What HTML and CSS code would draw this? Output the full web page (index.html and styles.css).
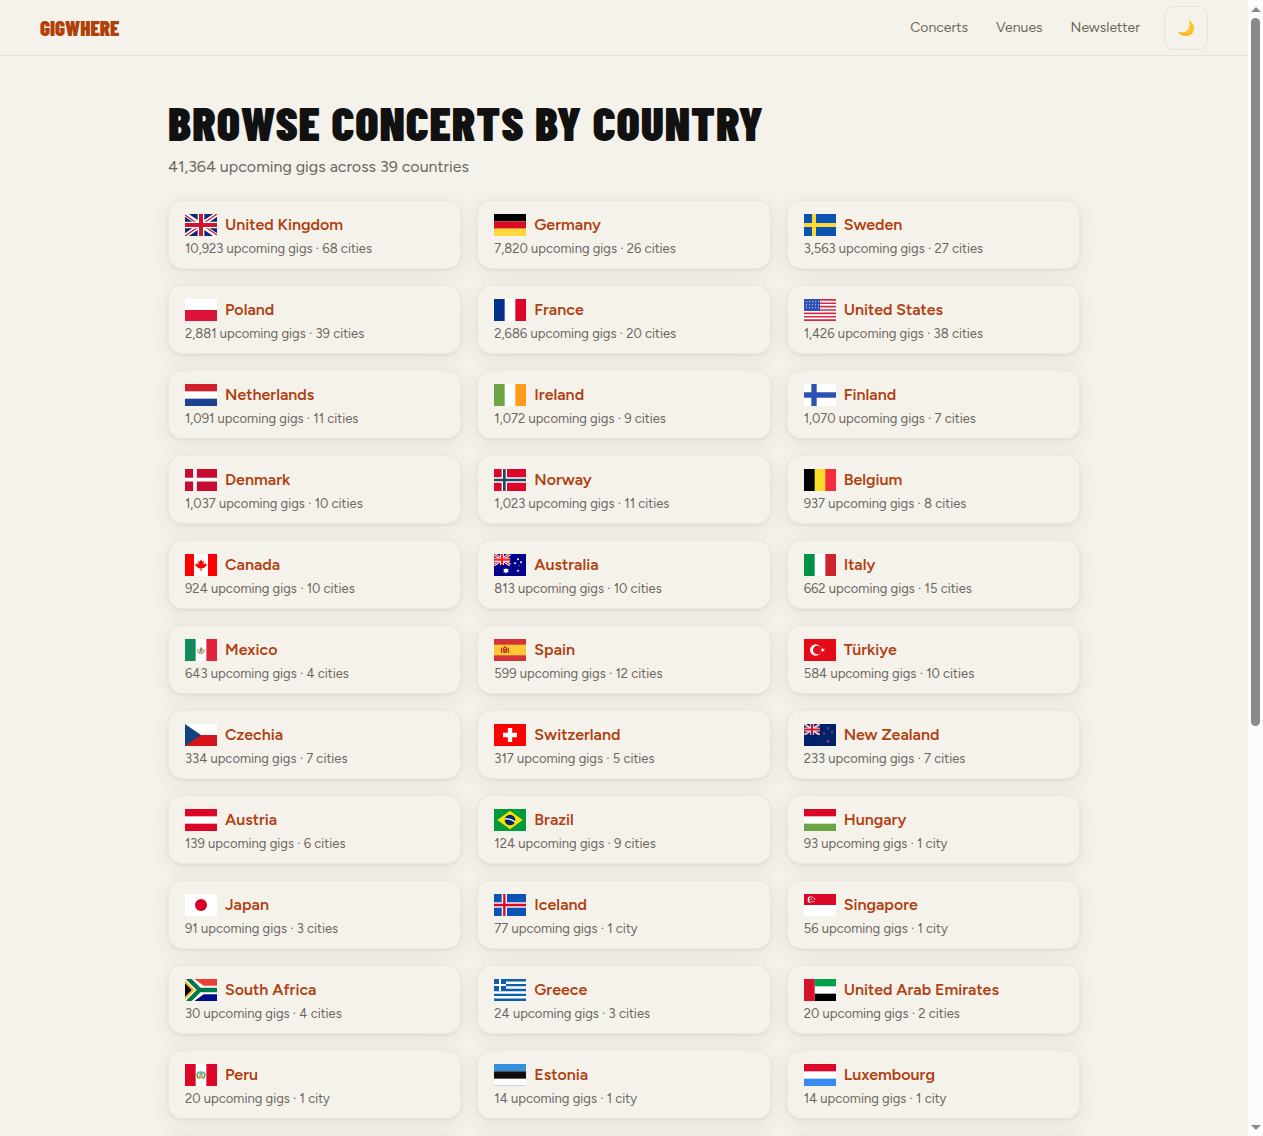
FILE: index.html
```html
<!DOCTYPE html>
<html lang="en">
<head>
<meta charset="utf-8">
<meta name="viewport" content="width=device-width, initial-scale=1">
<title>Gigwhere</title>
<link rel="stylesheet" href="styles.css">
</head>
<body>
<svg class="defs" aria-hidden="true">
  <symbol id="union" viewBox="0 0 96 66" preserveAspectRatio="none">
    <rect width="96" height="66" fill="#0b2a73"/>
    <path d="M0 0L96 66M96 0L0 66" stroke="#fff" stroke-width="13"/>
    <path d="M0 3L48 36M96 63L48 30M96 0L48 33M0 66L48 33" stroke="#d0142c" stroke-width="4"/>
    <path d="M48 0V66M0 33H96" stroke="#fff" stroke-width="20"/>
    <path d="M48 0V66M0 33H96" stroke="#d0142c" stroke-width="12"/>
  </symbol>
</svg>
<div class="screen">
<div class="pane">
  <header class="topbar">
    <a class="logo" href="#">GIGWHERE</a>
    <nav class="nav">
      <a href="#">Concerts</a>
      <a href="#">Venues</a>
      <a href="#">Newsletter</a>
    </nav>
    <button class="theme" type="button" aria-label="Dark mode">
      <svg viewBox="0 0 18 18" aria-hidden="true"><path d="M11.500 1C16 3.500 18.500 8 16.300 12.500C13.500 18 5 18.600 1 12.600C6 14.500 10.500 12.500 11.900 9C13 6 12.600 3.500 11.500 1Z" fill="#ffc62b"/><path d="M16.300 12.500C13.500 18 5 18.600 1 12.600C6 16 13 15.500 16.300 12.500Z" fill="#f5b31d"/></svg>
    </button>
  </header>
  <main class="content">
    <h1>BROWSE CONCERTS BY COUNTRY</h1>
    <p class="summary">41,364 upcoming gigs across 39 countries</p>
    <ul class="grid">
      <li class="card"><a class="name" href="#"><svg class="flag" viewBox="0 0 96 66" preserveAspectRatio="none"><use href="#union" width="96" height="66"/></svg>United Kingdom</a><p>10,923 upcoming gigs · 68 cities</p></li>
      <li class="card"><a class="name" href="#"><svg class="flag" viewBox="0 0 96 66" preserveAspectRatio="none"><path fill="#000" d="M0 0H96V22H0Z"/><path fill="#dc0a1e" d="M0 22H96V44H0Z"/><path fill="#ffd93b" d="M0 44H96V66H0Z"/></svg>Germany</a><p>7,820 upcoming gigs · 26 cities</p></li>
      <li class="card"><a class="name" href="#"><svg class="flag" viewBox="0 0 96 66" preserveAspectRatio="none"><path fill="#0a52b4" d="M0 0H96V66H0Z"/><path stroke="#ffd733" stroke-width="12" d="M30 0V66M0 33H96"/></svg>Sweden</a><p>3,563 upcoming gigs · 27 cities</p></li>

      <li class="card"><a class="name" href="#"><svg class="flag" viewBox="0 0 96 66" preserveAspectRatio="none"><path fill="#fff" d="M0 0H96V33H0Z"/><path fill="#dc143c" d="M0 33H96V66H0Z"/></svg>Poland</a><p>2,881 upcoming gigs · 39 cities</p></li>
      <li class="card"><a class="name" href="#"><svg class="flag" viewBox="0 0 96 66" preserveAspectRatio="none"><path fill="#fff" d="M0 0H96V66H0Z"/><path fill="#04308c" d="M0 0H32V66H0Z"/><path fill="#dc0628" d="M64 0H96V66H64Z"/></svg>France</a><p>2,686 upcoming gigs · 20 cities</p></li>
      <li class="card"><a class="name" href="#"><svg class="flag" viewBox="0 0 96 66" preserveAspectRatio="none"><path fill="#fff" d="M0 0H96V66H0Z"/><path stroke="#d02c46" stroke-width="5" d="M0 2.500H96M0 12.700H96M0 22.900H96M0 33H96M0 43.200H96M0 53.300H96M0 63.500H96"/><path fill="#3052b4" d="M0 0H48V36H0Z"/><path stroke="#c8d2f0" stroke-width="3" stroke-dasharray="3 6" d="M6 8H45M6 17H45M6 26H45"/></svg>United States</a><p>1,426 upcoming gigs · 38 cities</p></li>

      <li class="card"><a class="name" href="#"><svg class="flag" viewBox="0 0 96 66" preserveAspectRatio="none"><path fill="#fff" d="M0 0H96V66H0Z"/><path fill="#cf202b" d="M0 0H96V22H0Z"/><path fill="#1f4290" d="M0 44H96V66H0Z"/></svg>Netherlands</a><p>1,091 upcoming gigs · 11 cities</p></li>
      <li class="card"><a class="name" href="#"><svg class="flag" viewBox="0 0 96 66" preserveAspectRatio="none"><path fill="#fff" d="M0 0H96V66H0Z"/><path fill="#6da544" d="M0 0H32V66H0Z"/><path fill="#ff9a1a" d="M64 0H96V66H64Z"/></svg>Ireland</a><p>1,072 upcoming gigs · 9 cities</p></li>
      <li class="card"><a class="name" href="#"><svg class="flag" viewBox="0 0 96 66" preserveAspectRatio="none"><path fill="#fff" d="M0 0H96V66H0Z"/><path stroke="#2e52b2" stroke-width="16" d="M30 0V66M0 33H96"/></svg>Finland</a><p>1,070 upcoming gigs · 7 cities</p></li>

      <li class="card"><a class="name" href="#"><svg class="flag" viewBox="0 0 96 66" preserveAspectRatio="none"><path fill="#c60c30" d="M0 0H96V66H0Z"/><path stroke="#fff" stroke-width="11" d="M30 0V66M0 32H96"/></svg>Denmark</a><p>1,037 upcoming gigs · 10 cities</p></li>
      <li class="card"><a class="name" href="#"><svg class="flag" viewBox="0 0 96 66" preserveAspectRatio="none"><path fill="#dc0628" d="M0 0H96V66H0Z"/><path stroke="#fff" stroke-width="16" d="M31 0V66M0 33H96"/><path stroke="#1b4470" stroke-width="8" d="M31 0V66M0 33H96"/></svg>Norway</a><p>1,023 upcoming gigs · 11 cities</p></li>
      <li class="card"><a class="name" href="#"><svg class="flag" viewBox="0 0 96 66" preserveAspectRatio="none"><path fill="#ffdc28" d="M0 0H96V66H0Z"/><path fill="#000" d="M0 0H32V66H0Z"/><path fill="#f32d3f" d="M64 0H96V66H64Z"/></svg>Belgium</a><p>937 upcoming gigs · 8 cities</p></li>

      <li class="card"><a class="name" href="#"><svg class="flag" viewBox="0 0 96 66" preserveAspectRatio="none"><path fill="#fff" d="M0 0H96V66H0Z"/><path fill="#f00" d="M0 0H27V66H0ZM69 0H96V66H69ZM48 16L52 23L57 21L55 32L61 28L66 33L56 43H49.500V51H46.500V43H40L30 33L35 28L41 32L39 21L44 23Z"/></svg>Canada</a><p>924 upcoming gigs · 10 cities</p></li>
      <li class="card"><a class="name" href="#"><svg class="flag" viewBox="0 0 96 66" preserveAspectRatio="none"><path fill="#00008b" d="M0 0H96V66H0Z"/><path stroke="#fff" stroke-width="9" d="M0 0L48 33M48 0L0 33"/><path stroke="#f33" stroke-width="4" d="M0 0L48 33M48 0L0 33"/><path stroke="#fff" stroke-width="12" d="M24 0V33M0 17H48"/><path stroke="#f22" stroke-width="7" d="M24 0V33M0 17H48"/><g fill="#fff"><path d="M36 41L38 45L44 45L42 50L44 55L38 55L36 59L33 55L28 55L30 50L28 45L34 45Z"/><circle cx="72" cy="16" r="3"/><circle cx="63" cy="28" r="3"/><circle cx="81" cy="25" r="3"/><circle cx="72" cy="50" r="3"/><circle cx="75" cy="35" r="1.500"/></g></svg>Australia</a><p>813 upcoming gigs · 10 cities</p></li>
      <li class="card"><a class="name" href="#"><svg class="flag" viewBox="0 0 96 66" preserveAspectRatio="none"><path fill="#fff" d="M0 0H96V66H0Z"/><path fill="#009246" d="M0 0H32V66H0Z"/><path fill="#ce2430" d="M64 0H96V66H64Z"/></svg>Italy</a><p>662 upcoming gigs · 15 cities</p></li>

      <li class="card"><a class="name" href="#"><svg class="flag" viewBox="0 0 96 66" preserveAspectRatio="none"><path fill="#fff" d="M0 0H96V66H0Z"/><path fill="#128a60" d="M0 0H32V66H0Z"/><path fill="#e0243c" d="M64 0H96V66H64Z"/><path d="M38 31Q38 43 48 43Q58 43 58 31" fill="none" stroke="#9aa77c" stroke-width="4"/><path d="M48 23L53 31L51 39H45L43 32Z" fill="#a28455"/></svg>Mexico</a><p>643 upcoming gigs · 4 cities</p></li>
      <li class="card"><a class="name" href="#"><svg class="flag" viewBox="0 0 96 66" preserveAspectRatio="none"><path fill="#d43338" d="M0 0H96V66H0Z"/><path fill="#ffc832" d="M0 17H96V49H0Z"/><path fill="#ad3520" d="M21 26H25V42H21ZM41 26H45V42H41ZM27 27L33 21L39 27V39L33 43L27 39Z"/><path fill="#eca443" d="M30 27H36V30H30ZM29 34H32V37H29ZM34 34H37V37H34Z"/></svg>Spain</a><p>599 upcoming gigs · 12 cities</p></li>
      <li class="card"><a class="name" href="#"><svg class="flag" viewBox="0 0 96 66" preserveAspectRatio="none"><path fill="#e60a17" d="M0 0H96V66H0Z"/><circle cx="35" cy="33" r="17" fill="#fff"/><circle cx="40" cy="33" r="13" fill="#e60a17"/><path fill="#fff" d="M49 33L54 31L55 26L58 30L62 29L60 33L62 37L58 36L55 40L54 35Z"/></svg>Türkiye</a><p>584 upcoming gigs · 10 cities</p></li>

      <li class="card"><a class="name" href="#"><svg class="flag" viewBox="0 0 96 66" preserveAspectRatio="none"><path fill="#fff" d="M0 0H96V33H0Z"/><path fill="#d7141a" d="M0 33H96V66H0Z"/><path fill="#11457e" d="M0 0L48 33L0 66Z"/></svg>Czechia</a><p>334 upcoming gigs · 7 cities</p></li>
      <li class="card"><a class="name" href="#"><svg class="flag" viewBox="0 0 96 66" preserveAspectRatio="none"><path fill="#f00" d="M0 0H96V66H0Z"/><path stroke="#fff" stroke-width="13" d="M48 12V54M27 33H69"/></svg>Switzerland</a><p>317 upcoming gigs · 5 cities</p></li>
      <li class="card"><a class="name" href="#"><svg class="flag" viewBox="0 0 96 66" preserveAspectRatio="none"><path fill="#00226a" d="M0 0H96V66H0Z"/><use href="#union" width="48" height="33"/><g fill="#b03462" stroke="#4a538c"><circle cx="72" cy="13" r="3"/><circle cx="60" cy="29" r="3"/><circle cx="84" cy="25" r="3"/><circle cx="72" cy="52" r="4"/></g></svg>New Zealand</a><p>233 upcoming gigs · 7 cities</p></li>

      <li class="card"><a class="name" href="#"><svg class="flag" viewBox="0 0 96 66" preserveAspectRatio="none"><path fill="#dc0628" d="M0 0H96V66H0Z"/><path fill="#fff" d="M0 22H96V44H0Z"/></svg>Austria</a><p>139 upcoming gigs · 6 cities</p></li>
      <li class="card"><a class="name" href="#"><svg class="flag" viewBox="0 0 96 66" preserveAspectRatio="none"><path fill="#009b3a" d="M0 0H96V66H0Z"/><path fill="#fedf00" d="M48 5L86 33L48 61L10 33Z"/><circle cx="48" cy="33" r="16" fill="#002776"/><path d="M33 30Q50 27 63 39" fill="none" stroke="#fff" stroke-width="4"/></svg>Brazil</a><p>124 upcoming gigs · 9 cities</p></li>
      <li class="card"><a class="name" href="#"><svg class="flag" viewBox="0 0 96 66" preserveAspectRatio="none"><path fill="#fff" d="M0 0H96V66H0Z"/><path fill="#dc0628" d="M0 0H96V22H0Z"/><path fill="#6da544" d="M0 44H96V66H0Z"/></svg>Hungary</a><p>93 upcoming gigs · 1 city</p></li>

      <li class="card"><a class="name" href="#"><svg class="flag" viewBox="0 0 96 66" preserveAspectRatio="none"><path fill="#fff" d="M0 0H96V66H0Z"/><circle cx="48" cy="33" r="18" fill="#d80027"/></svg>Japan</a><p>91 upcoming gigs · 3 cities</p></li>
      <li class="card"><a class="name" href="#"><svg class="flag" viewBox="0 0 96 66" preserveAspectRatio="none"><path fill="#0a52b4" d="M0 0H96V66H0Z"/><path stroke="#eef0f8" stroke-width="16" d="M31 0V66M0 33H96"/><path stroke="#dc0628" stroke-width="7" d="M31 0V66M0 33H96"/></svg>Iceland</a><p>77 upcoming gigs · 1 city</p></li>
      <li class="card"><a class="name" href="#"><svg class="flag" viewBox="0 0 96 66" preserveAspectRatio="none"><path fill="#fff" d="M0 0H96V66H0Z"/><path fill="#dc0628" d="M0 0H96V33H0Z"/><circle cx="21" cy="17" r="10" fill="#fff"/><circle cx="26" cy="17" r="10" fill="#dc0628"/><g fill="#fff"><circle cx="27" cy="10" r="2"/><circle cx="22" cy="15" r="2"/><circle cx="32" cy="15" r="2"/><circle cx="24" cy="22" r="2"/><circle cx="30" cy="22" r="2"/></g></svg>Singapore</a><p>56 upcoming gigs · 1 city</p></li>

      <li class="card"><a class="name" href="#"><svg class="flag" viewBox="0 0 96 66" preserveAspectRatio="none"><path fill="#fff" d="M0 0H96V66H0Z"/><path fill="#ea3f33" d="M28 0H96V20H56Z"/><path fill="#000c8a" d="M28 66H96V46H56Z"/><path d="M8 -3L44 33L8 69M44 33H96" fill="none" stroke="#fff" stroke-width="22"/><path d="M8 -3L44 33L8 69M42 33H96" fill="none" stroke="#007847" stroke-width="13"/><path fill="#ffb81c" d="M0 4L30 33L0 62Z"/><path fill="#000" d="M0 13L20 33L0 53Z"/></svg>South Africa</a><p>30 upcoming gigs · 4 cities</p></li>
      <li class="card"><a class="name" href="#"><svg class="flag" viewBox="0 0 96 66" preserveAspectRatio="none"><path fill="#fff" d="M0 0H96V66H0Z"/><path stroke="#0d5eaf" stroke-width="7.300" d="M0 3.700H96M0 18.300H96M0 33H96M0 47.700H96M0 62.300H96"/><path fill="#0d5eaf" d="M0 0H36V36H0Z"/><path stroke="#fff" stroke-width="6" d="M18 0V36M0 18H36"/></svg>Greece</a><p>24 upcoming gigs · 3 cities</p></li>
      <li class="card"><a class="name" href="#"><svg class="flag" viewBox="0 0 96 66" preserveAspectRatio="none"><path fill="#fff" d="M0 0H96V66H0Z"/><path fill="#00a04a" d="M32 0H96V22H32Z"/><path fill="#000" d="M32 44H96V66H32Z"/><path fill="#d5142c" d="M0 0H32V66H0Z"/></svg>United Arab Emirates</a><p>20 upcoming gigs · 2 cities</p></li>

      <li class="card"><a class="name" href="#"><svg class="flag" viewBox="0 0 96 66" preserveAspectRatio="none"><path fill="#fff" d="M0 0H96V66H0Z"/><path fill="#dc0628" d="M0 0H32V66H0ZM64 0H96V66H64Z"/><path d="M41 23Q31 36 43 44M55 23Q65 36 53 44" fill="none" stroke="#5ba878" stroke-width="5"/><path fill="#e0a040" d="M42 34H54V43H42Z"/><path fill="#5bb8a0" d="M43 22H53V33H43Z"/></svg>Peru</a><p>20 upcoming gigs · 1 city</p></li>
      <li class="card"><a class="name" href="#"><svg class="flag" viewBox="0 0 96 66" preserveAspectRatio="none"><path fill="#fff" d="M0 0H96V66H0Z"/><path fill="#3590dd" d="M0 0H96V22H0Z"/><path fill="#140c0c" d="M0 22H96V44H0Z"/><path fill="#b9bcc0" d="M0 64H96V66H0Z"/></svg>Estonia</a><p>14 upcoming gigs · 1 city</p></li>
      <li class="card"><a class="name" href="#"><svg class="flag" viewBox="0 0 96 66" preserveAspectRatio="none"><path fill="#fff" d="M0 0H96V66H0Z"/><path fill="#dc0628" d="M0 0H96V22H0Z"/><path fill="#388af3" d="M0 44H96V66H0Z"/></svg>Luxembourg</a><p>14 upcoming gigs · 1 city</p></li>

      <li class="card" aria-hidden="true"></li>
      <li class="card" aria-hidden="true"></li>
      <li class="card" aria-hidden="true"></li>
    </ul>
  </main>
</div>
<div class="scrollbar" aria-hidden="true">
  <span class="arrow up"></span>
  <span class="thumb"></span>
  <span class="track"></span>
  <span class="arrow down"></span>
</div>
</div>
</body>
</html>
```
FILE: styles.css
```css
* { box-sizing: border-box; }

body {
  margin: 0;
  background: #f5f2eb;
  color: #6b6760;
  font: 16px/24px Figtree, Lato, sans-serif;
}

a { color: inherit; text-decoration: none; }
p, h1, ul { margin: 0; padding: 0; }

.defs { display: none; }

.screen {
  display: grid;
  grid-template-columns: minmax(0, 1fr) 15px;
  height: 100vh;
}

.pane {
  overflow-y: auto;
  scrollbar-width: none;
}

/* Header */
.topbar {
  display: flex;
  align-items: center;
  padding: 6px 40px 5px;
  border-bottom: 1px solid #e5e2dc;
}

.logo,
h1 {
  font-family: "Barlow Condensed", Roboto, sans-serif;
  font-weight: 900;
}

.logo {
  margin-right: auto;
  color: #b0400a;
  font-size: 21px;
}

.nav {
  display: flex;
  gap: 28px;
  margin-right: 24px;
  font-size: 14px;
}

.theme {
  display: grid;
  place-items: center;
  width: 44px;
  height: 44px;
  padding: 0;
  border: 1px solid #e7e4de;
  border-radius: 10px;
  background: none;
}

.theme svg { width: 18px; height: 18px; }

/* Country list */
.content {
  max-width: 960px;
  margin: 0 auto;
  padding: 48px 24px;
}

h1 {
  margin-bottom: 12px;
  color: #111;
  font-size: 48px;
  line-height: 36px;
  letter-spacing: 0.02em;
}

.summary {
  margin-bottom: 18px;
  line-height: 30px;
}

.grid {
  display: grid;
  grid-template-columns: repeat(auto-fill, minmax(260px, 1fr));
  gap: 16px;
  list-style: none;
}

.card {
  min-height: 69px;
  padding: 12px 16px 7px;
  border: 1px solid #ece9e3;
  border-radius: 14px;
  background: #f5f2ec;
  box-shadow: 0 1px 3px rgba(0, 0, 0, 0.06), 0 4px 20px rgba(0, 0, 0, 0.07);
}

.name {
  display: flex;
  align-items: center;
  gap: 8px;
  color: #b0400f;
  font-weight: 600;
}

.flag { width: 32px; height: 22px; }

.card p {
  font-size: 13px;
  line-height: 24px;
}

/* Scrollbar */
.scrollbar {
  display: grid;
  grid-template-rows: 18px 708fr 392fr 18px;
  justify-items: center;
  background: #fcfcfc;
}

.thumb {
  width: 9px;
  border-radius: 5px;
  background: #8a8a8a;
}

.arrow {
  align-self: center;
  border: 5px solid transparent;
}

.up { border-top: 0; border-bottom-color: #8a8a8a; }
.down { border-bottom: 0; border-top-color: #8a8a8a; }
```
